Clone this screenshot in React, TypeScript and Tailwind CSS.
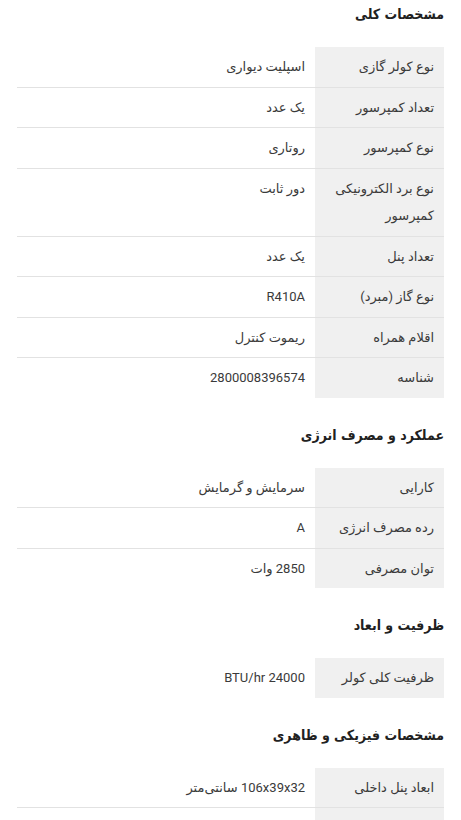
type Spec = { label: string; value: string };

type Section = { title: string; rows: Spec[] };

const sections: Section[] = [
  {
    title: "مشخصات کلی",
    rows: [
      { label: "نوع کولر گازی", value: "اسپلیت دیواری" },
      { label: "تعداد کمپرسور", value: "یک عدد" },
      { label: "نوع کمپرسور", value: "روتاری" },
      { label: "نوع برد الکترونیکی کمپرسور", value: "دور ثابت" },
      { label: "تعداد پنل", value: "یک عدد" },
      { label: "نوع گاز (مبرد)", value: "R410A" },
      { label: "اقلام همراه", value: "ریموت کنترل" },
      { label: "شناسه", value: "2800008396574" },
    ],
  },
  {
    title: "عملکرد و مصرف انرژی",
    rows: [
      { label: "کارایی", value: "سرمایش و گرمایش" },
      { label: "رده مصرف انرژی", value: "A" },
      { label: "توان مصرفی", value: "2850 وات" },
    ],
  },
  {
    title: "ظرفیت و ابعاد",
    rows: [{ label: "ظرفیت کلی کولر", value: "BTU/hr 24000" }],
  },
  {
    title: "مشخصات فیزیکی و ظاهری",
    rows: [
      { label: "ابعاد پنل داخلی", value: "106x39x32 سانتی‌متر" },
      // next row is below the fold, only its grey label cell peeks in
      { label: "\u00a0", value: "\u00a0" },
    ],
  },
];

function SpecTable({ rows }: { rows: Spec[] }) {
  return (
    <div>
      {rows.map((row, i) => (
        <div
          key={i}
          className={`flex ${i < rows.length - 1 ? "border-b border-[#e2e2e2]" : ""}`}
        >
          <div className="w-[129px] shrink-0 bg-[#f0f0f0] px-[10px] py-[6px] text-[#3a3a3a]">
            {row.label}
          </div>
          <div className="flex-1 px-[10px] py-[6px] text-[#3a3a3a]">{row.value}</div>
        </div>
      ))}
    </div>
  );
}

export default function App() {
  return (
    <div
      dir="rtl"
      className="min-h-screen bg-white px-[17px] text-[13px] leading-[27.5px] font-['Roboto','DejaVu_Sans',sans-serif]"
    >
      {sections.map((section, i) => (
        <section key={section.title} className={i === 0 ? "" : "mt-[23px]"}>
          <h2 className="mb-[19px] text-[14px] leading-[28px] font-bold text-[#212121] font-['DejaVu_Sans_Condensed','DejaVu_Sans',sans-serif]">
            {section.title}
          </h2>
          <SpecTable rows={section.rows} />
        </section>
      ))}
    </div>
  );
}
